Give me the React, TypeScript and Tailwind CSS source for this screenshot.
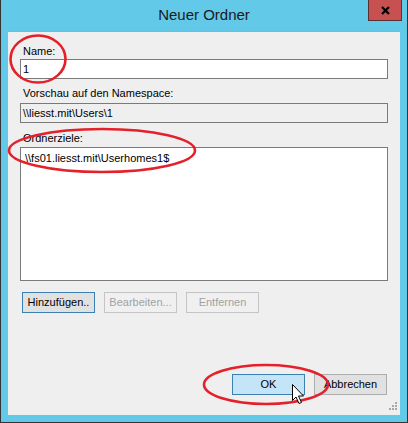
import React from "react";

const font = { fontFamily: '"Liberation Sans", Arial, sans-serif' };

function Btn({
  label,
  variant = "normal",
}: {
  label: string;
  variant?: "normal" | "focus" | "disabled" | "pressed";
}) {
  const cls =
    variant === "focus"
      ? "bg-[#e1e1e1] border-[#3c7fb1] text-black"
      : variant === "pressed"
      ? "bg-[#c4e5f8] border-[#3c7fb1] text-black"
      : variant === "disabled"
      ? "bg-[#f0f0f0] border-[#c4c4c4] text-[#a2a2a2]"
      : "bg-[#e1e1e1] border-[#adadad] text-black";
  return (
    <div
      className={`w-[73px] h-[21px] border flex items-center justify-center text-[11px] leading-none ${cls}`}
    >
      {label}
    </div>
  );
}

export default function App() {
  return (
    <div
      className="relative w-[408px] h-[423px] bg-[#63c9e9] border-x border-b border-[#333333] flex flex-col overflow-hidden"
      style={font}
    >
      {/* title bar */}
      <div className="relative h-[31px] shrink-0 flex items-center justify-center">
        <span className="text-[15px] text-[#1a1a1a] -mt-[1px]">Neuer Ordner</span>
        <div className="absolute right-[5px] top-0 w-[34px] h-[21px] bg-[#c75050] border border-[#5a3030] border-t-0 flex items-center justify-center">
          <svg width="9" height="9" viewBox="0 0 9 9">
            <path d="M1 1 L8 8 M8 1 L1 8" stroke="#000" strokeWidth="2.2" />
          </svg>
        </div>
      </div>

      {/* client */}
      <div className="mx-[7px] h-[384px] bg-[#efefef] border-t border-[#7fb4d2] flex flex-col px-3 pt-3 text-[11px] leading-[14px] text-black relative">
        <div className="ml-[3px]">Name:</div>
        <div className="mt-[1px] h-[20px] bg-white border border-[#7a7a7a] pl-[2px] flex items-center">
          1
        </div>

        <div className="ml-[3px] mt-[7px]">Vorschau auf den Namespace:</div>
        <div className="mt-[3px] h-[20px] bg-[#efefef] border border-[#7a7a7a] pl-[2px] flex items-center">
          \\liesst.mit\Users\1
        </div>

        <div className="ml-[3px] mt-[8px]">Ordnerziele:</div>
        <div className="mt-[2px] h-[134px] bg-white border border-[#7a7a7a] px-[4px] pt-[3px]">
          \\fs01.liesst.mit\Userhomes1$
        </div>

        <div className="mt-[11px] ml-[2px] flex gap-[9px]">
          <Btn label="Hinzufügen.." variant="focus" />
          <Btn label="Bearbeiten..." variant="disabled" />
          <Btn label="Entfernen" variant="disabled" />
        </div>

        <div className="mt-[61px] mr-[1px] flex justify-end gap-[9px]">
          <Btn label="OK" variant="pressed" />
          <Btn label="Abbrechen" />
        </div>

        {/* resize grip */}
        <svg
          className="absolute right-[2px] bottom-[4px]"
          width="9"
          height="9"
          viewBox="0 0 9 9"
        >
          {[
            [6, 0],
            [3, 3],
            [6, 3],
            [0, 6],
            [3, 6],
            [6, 6],
          ].map(([x, y], i) => (
            <rect key={i} x={x} y={y} width="2" height="2" fill="#a8a8a8" />
          ))}
        </svg>
      </div>

      {/* red annotations + cursor */}
      <svg
        className="absolute left-[-1px] top-0 pointer-events-none"
        width="408"
        height="423"
        viewBox="0 0 408 423"
      >
        <g fill="none" stroke="#e4202a" strokeWidth="2.6">
          <ellipse cx="38" cy="59" rx="27.5" ry="23.5" />
          <ellipse cx="102" cy="150.5" rx="93" ry="21.5" />
          <ellipse cx="266" cy="384.5" rx="62" ry="19.5" />
        </g>
        <path
          d="M292.5 384.5 L292.5 400.5 L296 397 L299 403.5 L301.5 402.5 L298.5 396 L303.5 396 Z"
          fill="#fff"
          stroke="#000"
          strokeWidth="1"
          strokeLinejoin="miter"
        />
      </svg>
    </div>
  );
}
